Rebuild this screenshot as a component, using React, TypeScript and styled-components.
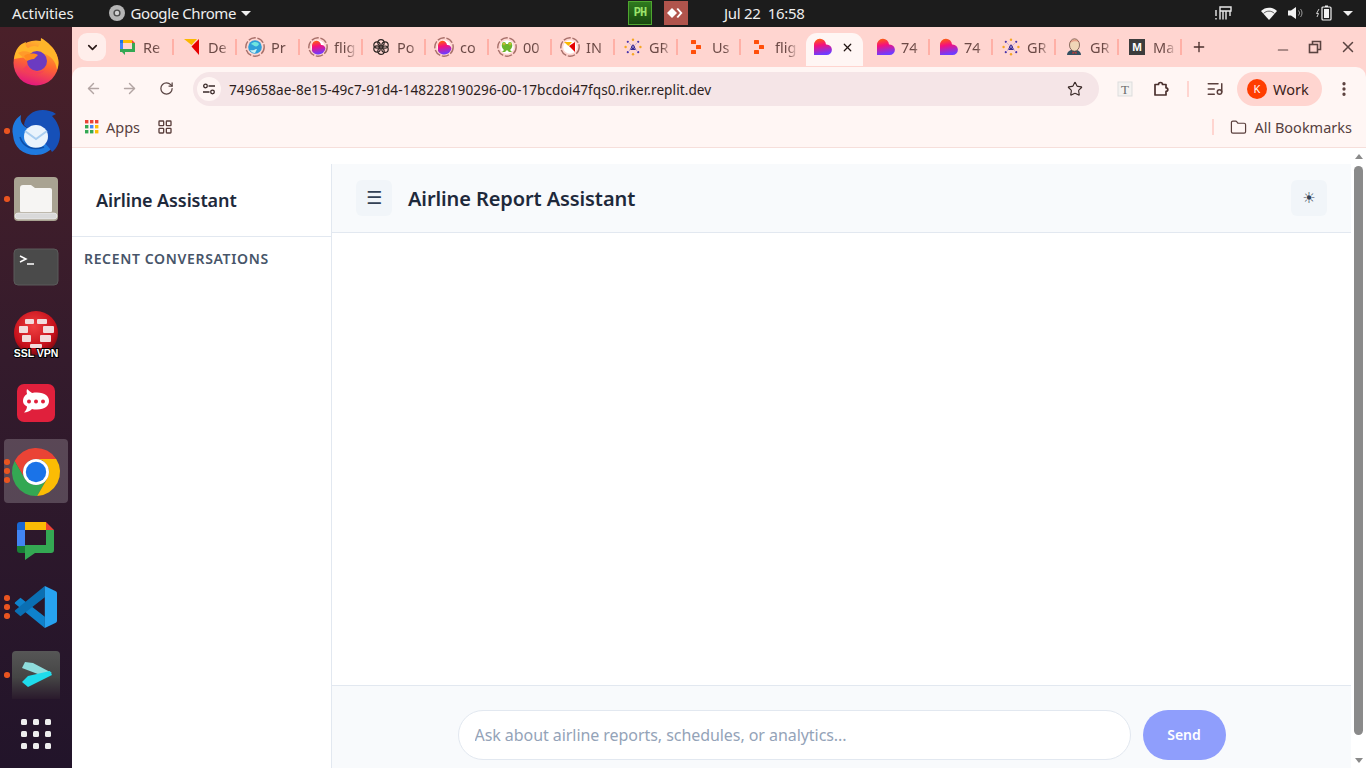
import React from "react";
import styled, { createGlobalStyle } from "styled-components";
import { ArrowLeft, ArrowRight, RotateCw, Star, Plus, Minus, X, ChevronDown, EllipsisVertical, ListMusic, LayoutGrid, Folder } from "lucide-react";

const Global = createGlobalStyle`
  html, body { margin: 0; padding: 0; width: 1366px; height: 768px; overflow: hidden; background: #fff; }
  * { box-sizing: border-box; }
  body { font-family: "Noto Sans", "Liberation Sans", sans-serif; }
`;

const Screen = styled.div`display:flex;flex-direction:column;width:1366px;height:768px;overflow:hidden;`;

/* ---- GNOME top bar ---- */
const TopBar = styled.header`
  display:flex;align-items:center;height:27px;flex:none;background:#1c1c1c;color:#eeeeee;
  font-size:15px;padding:0 0 1px 12px;position:relative;
`;
const TopLabel = styled.span`white-space:nowrap;letter-spacing:-.1px;`;
const AppLabel = styled(TopLabel)`letter-spacing:-.4px;`;
const AppMenu = styled.div`display:flex;align-items:center;gap:6px;margin-left:35px;`;
const Caret = styled.i`display:block;width:0;height:0;border-left:5px solid transparent;border-right:5px solid transparent;border-top:5px solid #eee;`;
const MenuCaret = styled(Caret)`margin-left:-1px;`;
const TrayCenter = styled.div`display:flex;align-items:center;margin-left:377px;`;
const TrayBadge = styled.div<{ $bg: string; $border: string }>`
  width:24px;height:24px;background:${p => p.$bg};border:1px solid ${p => p.$border};display:flex;align-items:center;justify-content:center;margin-right:12px;
  color:#9be36b;font:700 12px "Liberation Mono",monospace;letter-spacing:-1px;
`;
const Clock = styled.span`margin-left:24px;white-space:pre;font-size:15px;letter-spacing:-.3px;`;
const TrayRight = styled.div`display:flex;align-items:center;margin-left:auto;margin-right:13px;`;
const TrayGap = styled.span<{ $w: number }>`width:${p => p.$w}px;flex:none;`;

/* ---- Dock ---- */
const Body = styled.div`display:flex;flex:1;min-height:0;`;
const Dock = styled.nav`
  width:72px;flex:none;display:flex;flex-direction:column;padding-left:4px;padding-top:0;
  background:linear-gradient(180deg,#4a2029 0%,#341b2c 45%,#22142a 100%);
`;
const DockItem = styled.div<{ $active?: boolean }>`
  width:64px;height:68px;flex:none;position:relative;
  ${p => p.$active ? `&::before{content:"";position:absolute;inset:4px 0 0 0;border-radius:4px;background:rgba(255,255,255,.2);}` : ""}
  svg{position:relative;display:block;}
`;
const Pips = styled.div<{ $y: number }>`
  position:absolute;left:0;top:${p => p.$y}px;display:flex;flex-direction:column;gap:3.5px;
`;
const Pip = styled.i`display:block;width:5.5px;height:5.5px;border-radius:50%;background:#e95420;`;

/* ---- Chrome window ---- */
const Chrome = styled.div`flex:1;min-width:0;display:flex;flex-direction:column;`;
const TabStrip = styled.div`height:40px;flex:none;background:#ffd5d0;display:flex;align-items:center;padding-left:6px;`;
const TabSearch = styled.button`
  width:28px;height:28px;flex:none;border:0;border-radius:9px;background:#ffeeeb;display:flex;align-items:center;justify-content:center;padding:0;color:#2a1a18;margin-right:4px;
`;
const Tab = styled.div<{ $active?: boolean; $noSep?: boolean }>`
  width:63px;height:40px;flex:none;position:relative;display:flex;align-items:center;padding-left:9px;
  color:#6c4a46;font-size:14.5px;
  &:nth-child(2){width:65px;margin-left:-2px;}
  ${p => p.$noSep ? "" : `&::after{content:"";position:absolute;right:-1px;top:12px;width:2px;height:16px;background:#ffb0a6;}`}
  ${p => p.$active ? `
    &::before{content:"";position:absolute;inset:6px 3px 0 3px;background:#fff6f4;border-radius:11px 11px 0 0;}
  ` : ""}
  & > *{position:relative;}
`;
const TabIcon = styled.span`width:20px;height:20px;flex:none;display:block;`;
const TabTitle = styled.span`
  margin-left:6px;width:23px;overflow:hidden;white-space:nowrap;
  -webkit-mask-image:linear-gradient(90deg,#000 55%,transparent 100%);mask-image:linear-gradient(90deg,#000 55%,transparent 100%);
`;
const TabClose = styled.span`margin-left:9px;display:flex;color:#201412;`;
const NewTab = styled.span`margin-left:10px;display:flex;color:#4a2f2c;`;
const WinControls = styled.div`margin-left:auto;display:flex;align-items:center;gap:16px;padding-right:9px;color:#5a4340;`;

const Toolbar = styled.div`
  height:43px;flex:none;background:#fff6f4;margin-top:0;display:flex;align-items:center;padding:0 0 0 12px;
  border-radius:10px 10px 0 0;position:relative;box-shadow:0 -1px 0 #ffd5d0;
`;
const ToolbarBack = styled.div`background:#ffd5d0;`;
const NavBtn = styled.span<{ $muted?: boolean }>`width:36px;flex:none;display:flex;justify-content:flex-start;padding-left:1px;color:${p => p.$muted ? "#b2a5a3" : "#5a4543"};`;
const Reload = styled(NavBtn)`width:38px;padding-left:3px;`;
const Omnibox = styled.div`
  width:906px;height:34px;flex:none;margin-left:-1px;border-radius:17px;background:#f5e5e7;display:flex;align-items:center;padding:0 16px 0 4px;
`;
const SiteChip = styled.span`width:24px;height:24px;border-radius:50%;background:#fff6f4;display:flex;align-items:center;justify-content:center;flex:none;`;
const Url = styled.span`margin-left:8px;padding-top:1px;font-size:13.6px;color:#2c1e1d;flex:1;white-space:nowrap;letter-spacing:.07px;`;
const ToolIcon = styled.span<{ $ml: number }>`display:flex;align-items:center;justify-content:center;flex:none;color:#5a3f3c;margin-left:${p => p.$ml}px;`;
const ToolDivider = styled.i<{ $ml: string }>`display:block;width:2px;height:16px;background:#ffd5d0;flex:none;margin-left:${p => p.$ml};`;
const Profile = styled.div`
  width:85px;height:34px;border-radius:17px;background:#ffd5d0;display:flex;align-items:center;padding-left:10px;gap:6px;flex:none;color:#3a1d1a;font-size:14.5px;margin-left:13px;
`;
const Avatar = styled.span`width:20px;height:20px;border-radius:50%;background:#ff3d00;color:#fff;font-size:11px;display:flex;align-items:center;justify-content:center;`;
const BookmarksBar = styled.div`
  height:38px;flex:none;background:#fff6f4;border-bottom:1px solid #f6dfdb;display:flex;align-items:center;padding:0 0 3px 13px;color:#57413f;font-size:14.5px;
`;
const BookmarkLabel = styled.span<{ $ml: number; $mr?: number }>`white-space:nowrap;margin-left:${p => p.$ml}px;margin-right:${p => p.$mr ?? 0}px;`;

/* ---- Web page ---- */
const Viewport = styled.div`flex:1;min-height:0;display:flex;background:#fff;`;
const Sidebar = styled.aside`width:259px;flex:none;display:flex;flex-direction:column;`;
const Brand = styled.div`
  height:89px;flex:none;border-bottom:1px solid #e2e8f0;padding:37px 0 0 24px;color:#1e293b;font-size:18px;font-weight:600;line-height:30px;white-space:nowrap;letter-spacing:-.1px;
`;
const SectionLabel = styled.div`
  padding:12px 0 0 12px;color:#475569;font-size:14px;font-weight:600;letter-spacing:.65px;line-height:20px;white-space:nowrap;
`;
const Main = styled.main`
  flex:1;min-width:0;margin-top:16px;border-left:1px solid #e2e8f0;display:flex;flex-direction:column;overflow:hidden;
`;
const Header = styled.div`
  height:69px;flex:none;background:#f8fafc;border-bottom:1px solid #e2e8f0;display:flex;align-items:center;padding:0 24px;
`;
const IconButton = styled.button<{ $size: number }>`
  width:36px;height:36px;flex:none;border:0;border-radius:6px;background:#f1f5f9;color:#334155;display:flex;align-items:center;justify-content:center;padding:0;
  font-family:"DejaVu Sans",sans-serif;font-size:${p => p.$size}px;line-height:1;
`;
const Title = styled.h1`margin:0 auto 0 16px;font-size:20px;font-weight:600;color:#1e293b;white-space:nowrap;letter-spacing:-.1px;`;
const Messages = styled.div`flex:1;min-height:0;background:#fff;`;
const Composer = styled.div`
  height:83px;flex:none;background:#f8fafc;border-top:1px solid #e2e8f0;padding-top:24px;display:flex;justify-content:center;
`;
const ComposerRow = styled.div`width:768px;display:flex;gap:12px;height:50px;`;
const Input = styled.input`
  flex:1;min-width:0;height:50px;border:1px solid #e2e8f0;border-radius:25px;background:#fff;padding:0 16px;font:400 16px "Noto Sans",sans-serif;letter-spacing:-.06px;outline:none;
  &::placeholder{color:#94a3b8;opacity:1;}
`;
const Send = styled.button`
  width:83px;height:50px;flex:none;border:0;border-radius:25px;background:#8f9efc;color:#fff;font:600 14px "Noto Sans",sans-serif;padding:0 0 1px;
`;
const ScrollTrack = styled.div`width:15px;flex:none;background:#fff;display:flex;flex-direction:column;align-items:center;`;
const ArrowUp = styled.i`display:block;margin-top:6px;width:0;height:0;border-left:4.5px solid transparent;border-right:4.5px solid transparent;border-bottom:5px solid #8a8a8a;`;
const ArrowDown = styled.i`display:block;margin-top:auto;margin-bottom:5px;width:0;height:0;border-left:4.5px solid transparent;border-right:4.5px solid transparent;border-top:5px solid #8a8a8a;`;
const Thumb = styled.div`width:9px;height:569px;margin-top:7px;border-radius:5px;background:#8a8a8a;`;

/* ---- Drawings ---- */
const Defs = () => (
  <svg width="0" height="0" style={{ position: "absolute" }}>
    <defs>
      <linearGradient id="love" x1="0" y1="0" x2="0.2" y2="1">
        <stop offset="0" stopColor="#ff6a00" /><stop offset=".45" stopColor="#f5107c" /><stop offset="1" stopColor="#6f3cff" />
      </linearGradient>
      <linearGradient id="fox" x1="0.7" y1="0" x2="0.4" y2="1">
        <stop offset="0" stopColor="#ffbd2e" /><stop offset=".5" stopColor="#ff6a2e" /><stop offset="1" stopColor="#e3177f" />
      </linearGradient>
      <linearGradient id="fade" x1="0" y1="0" x2="0" y2="1">
        <stop offset="0" stopColor="#565656" /><stop offset=".55" stopColor="#454545" /><stop offset="1" stopColor="#2a1a2c" />
      </linearGradient>
      <radialGradient id="vpn" cx=".45" cy=".35" r=".7">
        <stop offset="0" stopColor="#f04040" /><stop offset=".7" stopColor="#c40f1a" /><stop offset="1" stopColor="#6a0a10" />
      </radialGradient>
    </defs>
  </svg>
);

const Ring = () => <circle cx="10" cy="10" r="9.2" fill="none" stroke="#a8706a" strokeWidth="1.4" strokeDasharray="7.5 1.6" />;
const Heart = () => <path d="M2 18V8a6 6 0 0 1 12-.6h.6a5.3 5.3 0 0 1 0 10.6Z" fill="url(#love)" />;

const Favicon = ({ kind }: { kind: string }) => {
  const inner = () => {
    switch (kind) {
      case "chat": return (<g>
        <rect x="3" y="3" width="3" height="3" fill="#1a73e8" /><rect x="3" y="6" width="3" height="6" fill="#4285f4" /><rect x="6" y="3" width="9" height="3" fill="#fbbc04" />
        <path d="M15 3l3 3h-3z" fill="#ea4335" /><path d="M15 6h3v9H8v3l-3-3H3v-3h3v0h9z" fill="#34a853" /></g>);
      case "tri": return (<g><path d="M2 2h13L9.5 8z" fill="#fbb800" /><path d="M17 2v16L9.5 9.5z" fill="#e60000" /></g>);
      case "pr": return (<g><Ring /><circle cx="10" cy="10" r="6.8" fill="#2f9fd8" /><path d="M6 7c3-3 7-2 8 0-1 3-4 3-6 1z" fill="#6fe6df" /><path d="M5 13c3 1 5-1 7-1l-2 4c-2 0-4-1-5-3z" fill="#c9f2f5" /></g>);
      case "flig": return (<g><Ring /><circle cx="10" cy="10" r="6.8" fill="#fff" /><path d="M4 14V8.5a4.5 4.5 0 0 1 9-.4 3.6 3.6 0 0 1 3 6.3 7 7 0 0 1-12-.4Z" fill="url(#love)" /></g>);
      case "openai": return (<g fill="none" stroke="#2d2522" strokeWidth="1.2"><circle cx="10" cy="5.8" r="3.2" /><circle cx="14" cy="8" r="3.2" /><circle cx="14" cy="12.2" r="3.2" /><circle cx="10" cy="14.2" r="3.2" /><circle cx="6" cy="12" r="3.2" /><circle cx="6" cy="8" r="3.2" /></g>);
      case "frog": return (<g><Ring /><circle cx="10" cy="10" r="6.8" fill="#fff" /><path d="M5 7a2 2 0 0 1 4 0h2a2 2 0 0 1 4 0c1 3-1 5-2 6l2 2h-3l-2-2-2 2H5l2-2c-1-1-3-3-2-6z" fill="#6cb52d" /><circle cx="7" cy="7" r="1.3" fill="#f7e23a" /><circle cx="13" cy="7" r="1.3" fill="#f7e23a" /><circle cx="7" cy="7" r=".6" fill="#222" /><circle cx="13" cy="7" r=".6" fill="#222" /></g>);
      case "in": return (<g><Ring /><circle cx="10" cy="10" r="6.8" fill="#fff" /><path d="M4 5h8l-3.6 4z" fill="#fbb800" /><path d="M15 5v10L9 9z" fill="#e60000" /></g>);
      case "star": return (<g>
        <circle cx="10" cy="10.5" r="2" fill="#3a2a8c" /><path d="M10 7l3.4 6H6.6z" fill="#3a2a8c" />
        <g fill="#f5a623"><circle cx="10" cy="2.8" r="1.2" /><circle cx="10" cy="17.2" r="1.2" /><circle cx="2.6" cy="10" r="1.2" /><circle cx="17.4" cy="10" r="1.2" /></g>
        <g fill="#4a35a8"><circle cx="4.8" cy="4.8" r="1.1" /><circle cx="15.2" cy="4.8" r="1.1" /><circle cx="4.8" cy="15.2" r="1.1" /><circle cx="15.2" cy="15.2" r="1.1" /></g>
        <path d="M5 5l5 5 5-5M5 15l5-5 5 5" stroke="#a79be0" strokeWidth=".6" fill="none" /></g>);
      case "replit": return (<g fill="#ff4f0a"><rect x="5" y="3" width="5" height="4" rx=".6" /><rect x="10" y="8" width="5" height="4" rx=".6" /><rect x="5" y="13" width="5" height="4" rx=".6" /></g>);
      case "heart": return <Heart />;
      case "jenkins": return (<g><path d="M3 18c0-3 2-4 4-5h6c2 1 4 2 4 5z" fill="#335061" /><ellipse cx="10.5" cy="8" rx="5" ry="6.2" fill="#f0d6b7" stroke="#5a3f34" strokeWidth=".7" /><path d="M6 6c1-4 7-5 9-1-3-1-6-1-9 1z" fill="#d33833" opacity=".35" /><path d="M8.5 14.5l2 1.2 2-1.2v2.4l-2-1-2 1z" fill="#d33833" /></g>);
      case "m": return (<g><rect x="2" y="2" width="16" height="16" fill="#3c3c3c" /><text x="10" y="14.2" textAnchor="middle" fontSize="11.5" fontWeight="800" fill="#fff" fontFamily="Liberation Sans">M</text></g>);
    }
    return null;
  };
  return <svg width="20" height="20" viewBox="0 0 20 20" style={{ display: "block" }}>{inner()}</svg>;
};

const tabs = [
  { k: "chat", t: "Re" }, { k: "tri", t: "De" }, { k: "pr", t: "Pr" }, { k: "flig", t: "flig" }, { k: "openai", t: "Po" }, { k: "flig", t: "co" },
  { k: "frog", t: "00" }, { k: "in", t: "IN" }, { k: "star", t: "GR" }, { k: "replit", t: "Us" }, { k: "replit", t: "flig", noSep: true },
  { k: "heart", t: "", active: true, noSep: true }, { k: "heart", t: "74" }, { k: "heart", t: "74" }, { k: "star", t: "GR" }, { k: "jenkins", t: "GR" }, { k: "m", t: "Ma" },
];

const Firefox = () => (<svg width="64" height="68" viewBox="0 0 64 68">
  <circle cx="32" cy="36" r="22.5" fill="url(#fox)" />
  <path d="M10 32C11 22 16 17 22 15c-1 3 0 5 2 6 3-2 7-3 10-1 2-3 3-6 3-9 7 4 14 10 17 21 1 4 0 9-1 11-1-9-7-15-13-16z" fill="#ffb52a" />
  <path d="M14 26c5-3 12-2 15 2l-7 5c-3-3-6-5-8-7z" fill="#ff9a2a" />
  <circle cx="33" cy="34" r="10" fill="#6b3bc1" />
  <path d="M20 29c4-3 10-3 14-1l-4 4c-3 0-5 1-7 2z" fill="#ff8a1f" />
  <path d="M23 38c3 7 12 9 18 5-6 6-16 6-22-1z" fill="#f53a5f" opacity=".8" />
</svg>);
const Thunderbird = () => (<svg width="64" height="68" viewBox="0 0 64 68">
  <path d="M9 40c-2-9 2-16 8-20-1 5 0 8 3 11l30 20c-5 6-11 9-18 9C18 60 10 52 9 40z" fill="#1f7ae0" />
  <path d="M20 30c1-9 9-15 19-15 4 0 9 1 13 4l-4 2c5 5 8 12 8 18 0 8-3 14-8 18C45 50 30 40 20 30z" fill="#1650b8" />
  <ellipse cx="32" cy="41.5" rx="12" ry="11.5" fill="#eaf3fc" />
  <path d="M21 36l11 8 11-8" fill="none" stroke="#a9cdf0" strokeWidth="2" />
  <path d="M16 42c3 10 13 14 24 10" fill="none" stroke="#0e4fa8" strokeWidth="1.6" />
</svg>);
const Files = () => (<svg width="64" height="68" viewBox="0 0 64 68">
  <rect x="10" y="14" width="44" height="44" rx="4" fill="#a9a392" />
  <path d="M16 25a3 3 0 0 1 3-3h8l4 3h15a2 2 0 0 1 2 2v21a1 1 0 0 1-1 1H17a1 1 0 0 1-1-1z" fill="#f6f5f3" />
  <rect x="11" y="50" width="42" height="6" rx="3" fill="#d9d9d9" stroke="#fff" strokeWidth=".5" />
</svg>);
const Terminal = () => (<svg width="64" height="68" viewBox="0 0 64 68">
  <rect x="10" y="18" width="44" height="36" rx="4" fill="#4a4a4a" stroke="#5a5a5a" />
  <path d="M16 25l6 3-6 3M23 33h7" fill="none" stroke="#fff" strokeWidth="1.5" />
</svg>);
const Vpn = () => (<svg width="64" height="68" viewBox="0 0 64 68">
  <circle cx="32" cy="34" r="22" fill="url(#vpn)" />
  <g fill="#f2dcdc">
    <rect x="21" y="20" width="9" height="5" rx="1" /><rect x="33" y="20" width="10" height="5" rx="1" />
    <rect x="15" y="27" width="9" height="7" rx="1" /><rect x="39" y="27" width="11" height="7" rx="1" />
    <rect x="18" y="36" width="9" height="7" rx="1" /><rect x="36" y="36" width="11" height="7" rx="1" />
    <rect x="26" y="45" width="12" height="4" rx="1" />
  </g>
  <text x="32" y="58" textAnchor="middle" fontSize="10.5" fontWeight="700" fontFamily="Liberation Sans" fill="#fff" stroke="#000" strokeWidth="2" paintOrder="stroke">SSL VPN</text>
</svg>);
const Rocket = () => (<svg width="64" height="68" viewBox="0 0 64 68">
  <rect x="13" y="17" width="38" height="38" rx="7" fill="#e0203c" />
  <path d="M23 22c2 2 4 3 5 4 2-.5 3-.5 5-.5 8 0 12 4 12 8.500s-4 8.500-12 8.500c-2 0-4 0-5-.5-2 2-5 3.500-8 3.500 2-2 3-4 3-6-3-1.500-4-3.500-4-5.500 0-3 1-5 4-7-.5-2-.5-3.500 0-5z" fill="#fff" />
  <circle cx="25" cy="34.500" r="2" fill="#e0203c" /><circle cx="32" cy="34.500" r="2" fill="#e0203c" /><circle cx="39" cy="34.500" r="2" fill="#e0203c" />
</svg>);
const ChromeLogo = () => (<svg width="64" height="68" viewBox="0 0 64 68">
  <g transform="translate(32 37)">
    <path d="M20.2-13A24 24 0 0 0-21.36-11L-11.26 6.5A13 13 0 0 1 0-13Z" fill="#ea4335" />
    <path d="M-21.36-11A24 24 0 0 0 1.16 24L11.26 6.5A13 13 0 0 1-11.26 6.5Z" fill="#34a853" />
    <path d="M1.16 24A24 24 0 0 0 20.2-13H0A13 13 0 0 1 11.26 6.5Z" fill="#fbbc04" />
    <circle r="13" fill="#fff" /><circle r="10.2" fill="#1a73e8" />
  </g>
</svg>);
const ChatLogo = () => (<svg width="64" height="68" viewBox="0 0 64 68">
  <path d="M13 22a3 3 0 0 1 3-3h5v8h-8z" fill="#1967d2" /><rect x="13" y="27" width="8" height="16" fill="#4285f4" />
  <path d="M13 43h8v7h-5a3 3 0 0 1-3-3z" fill="#188038" /><rect x="21" y="19" width="21" height="8" fill="#fbbc04" />
  <path d="M42 19l8 8h-8z" fill="#ea4335" />
  <path d="M42 27h8v20a3 3 0 0 1-3 3H31l-10 7V42h21z" fill="#34a853" />
</svg>);
const VSCode = () => (<svg width="64" height="68" viewBox="0 0 64 68">
  <g transform="translate(11 15) scale(.42)">
    <path d="M71 100V73L13 28 1 38c-2 2-2 4 0 5z" fill="#0f82cc" />
    <path d="M71 0v27L13 72 1 62c-2-2-2-4 0-5z" fill="#0a6fb3" />
    <path d="M71 0l25 12c3 2 4 3 4 6v64c0 3-1 4-4 6L71 100z" fill="#27a2f0" />
  </g>
</svg>);
const Warp = () => (<svg width="64" height="68" viewBox="0 0 64 68">
  <path d="M8 16a4 4 0 0 1 4-4h40a4 4 0 0 1 4 4v44H8z" fill="url(#fade)" />
  <path d="M21 23l8 1 19 10-9 3-21-8z" fill="#8fdcdc" />
  <path d="M18 43l6-6 22-5 2 4-24 12z" fill="#1fdcec" />
</svg>);
const AppGrid = () => (<svg width="64" height="68" viewBox="0 0 64 68">
  <g fill="#eeeeee">{[20, 32, 44].map(x => [15, 27, 39].map(y => <rect key={`${x}-${y}`} x={x - 3} y={y - 3} width="6" height="6" rx="1.5" />))}</g>
</svg>);

const dock: { C: React.FC; pips?: number; y?: number; active?: boolean }[] = [
  { C: Firefox }, { C: Thunderbird, pips: 1, y: 33 }, { C: Files, pips: 1, y: 33 }, { C: Terminal }, { C: Vpn }, { C: Rocket },
  { C: ChromeLogo, pips: 3, y: 24, active: true }, { C: ChatLogo }, { C: VSCode, pips: 3, y: 24 }, { C: Warp, pips: 1, y: 33 }, { C: AppGrid },
];

const Svg = ({ w, h, children }: { w: number; h: number; children: React.ReactNode }) => (
  <svg width={w} height={h} viewBox={`0 0 ${w} ${h}`} style={{ display: "block" }}>{children}</svg>
);

export default function App() {
  return (
    <Screen>
      <Global />
      <Defs />
      <TopBar>
        <TopLabel>Activities</TopLabel>
        <AppMenu>
          <Svg w={16} h={16}><circle cx="8" cy="8" r="8" fill="#b5b5b5" /><circle cx="8" cy="8" r="3.6" fill="#4a4a4a" /><circle cx="8" cy="8" r="2.2" fill="#d0d0d0" /></Svg>
          <AppLabel>Google Chrome</AppLabel>
          <MenuCaret />
        </AppMenu>
        <TrayCenter>
          <TrayBadge $bg="linear-gradient(#2f7a1e,#17480f)" $border="#4ea52f">PH</TrayBadge>
          <TrayBadge $bg="#b0544c" $border="#b0544c">
            <Svg w={18} h={14}><path d="M5 2l5 5-5 5-5-5z" fill="#fff" /><path d="M11 2l4.500 5L11 12l-1.500-1L13 7 9.500 3z" fill="#fff" /></Svg>
          </TrayBadge>
          <Clock>Jul 22  16:58</Clock>
        </TrayCenter>
        <TrayRight>
          <Svg w={18} h={16}><g fill="none" stroke="#e8e8e8" strokeWidth="1.4"><path d="M1 5v6M1 13v1.500M5 6v8.500M8 6v8.500M11 6v8.500" /><path d="M5 6V2h11v4H5" /><path d="M15 6v5" /></g></Svg>
          <TrayGap $w={28} />
          <Svg w={16} h={13}><path d="M0 4C4-.5 12-.5 16 4l-8 9z" fill="#f2f2f2" /><path d="M2.600 6.400c3-3 7.800-3 10.800 0" fill="none" stroke="#1c1c1c" strokeWidth=".7" /></Svg>
          <TrayGap $w={11} />
          <Svg w={15} h={14}><path d="M0 4.500h3L8 1v12L3 9.500H0z" fill="#f2f2f2" /><path d="M10.500 4.500a3.500 3.500 0 0 1 0 5M12.500 3a6 6 0 0 1 0 8" fill="none" stroke="#999" strokeWidth="1" /></Svg>
          <TrayGap $w={13} />
          <Svg w={16} h={16}><path d="M3 4L0.500 8.500H2.500L1 12" fill="none" stroke="#d0d0d0" strokeWidth="1" /><rect x="6" y="2" width="9" height="13" rx="1" fill="none" stroke="#f2f2f2" strokeWidth="1.200" /><rect x="9" y="0.500" width="3" height="1.500" fill="#f2f2f2" /><rect x="8" y="4" width="5" height="9" fill="#f2f2f2" /></Svg>
          <TrayGap $w={11} />
          <Caret />
        </TrayRight>
      </TopBar>
      <Body>
        <Dock>
          {dock.map(({ C, pips, y, active }, i) => (
            <DockItem key={i} $active={active}>
              <C />
              {pips ? <Pips $y={y ?? 30}>{Array.from({ length: pips }).map((_, j) => <Pip key={j} />)}</Pips> : null}
            </DockItem>
          ))}
        </Dock>
        <Chrome>
          <TabStrip>
            <TabSearch><ChevronDown size={15} strokeWidth={2.6} /></TabSearch>
            {tabs.map((t, i) => (
              <Tab key={i} $active={t.active} $noSep={t.noSep}>
                <TabIcon><Favicon kind={t.k} /></TabIcon>
                {t.active
                  ? <TabClose><X size={13} strokeWidth={2.2} /></TabClose>
                  : <TabTitle>{t.t}</TabTitle>}
              </Tab>
            ))}
            <NewTab><Plus size={16} strokeWidth={2} /></NewTab>
            <WinControls>
              <Minus size={16} strokeWidth={1.8} style={{ marginTop: 6 }} />
              <Svg w={16} h={16}><g fill="none" stroke="#5a4340" strokeWidth="1.6"><rect x="2.500" y="5.500" width="8" height="8" /><path d="M5.500 5V2.500h8v8H11" /></g></Svg>
              <X size={18} strokeWidth={2} />
            </WinControls>
          </TabStrip>
          <ToolbarBack>
            <Toolbar>
              <NavBtn $muted><ArrowLeft size={17} /></NavBtn>
              <NavBtn $muted><ArrowRight size={17} /></NavBtn>
              <Reload><RotateCw size={15} strokeWidth={2} /></Reload>
              <Omnibox>
                <SiteChip>
                  <Svg w={14} h={12}><g fill="none" stroke="#3a2a28" strokeWidth="1.300"><circle cx="3.500" cy="3" r="1.800" /><path d="M6.500 3H13M1 9h6.500" /><circle cx="10.500" cy="9" r="1.800" /></g></Svg>
                </SiteChip>
                <Url>749658ae-8e15-49c7-91d4-148228190296-00-17bcdoi47fqs0.riker.replit.dev</Url>
                <Star size={16} strokeWidth={1.7} color="#3a2a28" />
              </Omnibox>
              <ToolIcon $ml={18}>
                <Svg w={16} h={16}><rect x="1" y="1" width="14" height="14" fill="#f4f2f0" stroke="#ddd" /><text x="8" y="12.500" textAnchor="middle" fontSize="13" fontFamily="Liberation Serif" fill="#6a6a6a">T</text></Svg>
              </ToolIcon>
              <ToolIcon $ml={19}>
                <Svg w={18} h={18}><path d="M3 4.500h3.500a2 2 0 0 1 4 0H14v3.300a1.800 1.800 0 0 1 0 3.600V15H3v-3.200h0V4.500z" fill="none" stroke="#4a302d" strokeWidth="1.700" strokeLinejoin="round" /></Svg>
              </ToolIcon>
              <ToolDivider $ml="17px" />
              <ToolIcon $ml={17}><ListMusic size={18} strokeWidth={2} /></ToolIcon>
              <Profile>
                <Avatar>K</Avatar>
                <span>Work</span>
              </Profile>
              <ToolIcon $ml={13}><EllipsisVertical size={18} strokeWidth={2.4} /></ToolIcon>
            </Toolbar>
          </ToolbarBack>
          <BookmarksBar>
            <Svg w={14} h={14}>
              {["#ea4335", "#ea4335", "#ea4335", "#34a853", "#4285f4", "#fbbc04", "#34a853", "#34a853", "#fbbc04"].map((c, i) => (
                <rect key={i} x={(i % 3) * 5} y={Math.floor(i / 3) * 5} width="3.4" height="3.4" fill={c} />
              ))}
            </Svg>
            <BookmarkLabel $ml={7}>Apps</BookmarkLabel>
            <ToolIcon $ml={17}><LayoutGrid size={16} strokeWidth={2} /></ToolIcon>
            <ToolDivider $ml="auto" />
            <ToolIcon $ml={16}><Folder size={17} strokeWidth={1.7} /></ToolIcon>
            <BookmarkLabel $ml={7} $mr={14}>All Bookmarks</BookmarkLabel>
          </BookmarksBar>
          <Viewport>
            <Sidebar>
              <Brand>Airline Assistant</Brand>
              <SectionLabel>RECENT CONVERSATIONS</SectionLabel>
            </Sidebar>
            <Main>
              <Header>
                <IconButton $size={18}>☰</IconButton>
                <Title>Airline Report Assistant</Title>
                <IconButton $size={15}>☀</IconButton>
              </Header>
              <Messages />
              <Composer>
                <ComposerRow>
                  <Input placeholder="Ask about airline reports, schedules, or analytics..." />
                  <Send>Send</Send>
                </ComposerRow>
              </Composer>
            </Main>
            <ScrollTrack>
              <ArrowUp />
              <Thumb />
              <ArrowDown />
            </ScrollTrack>
          </Viewport>
        </Chrome>
      </Body>
    </Screen>
  );
}
